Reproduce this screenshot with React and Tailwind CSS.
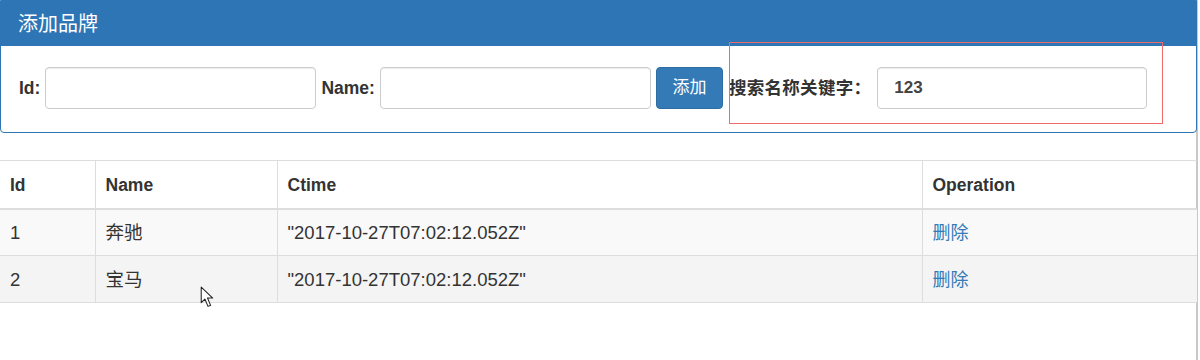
const rows = [
  { id: 1, name: '奔驰', ctime: '"2017-10-27T07:02:12.052Z"' },
  { id: 2, name: '宝马', ctime: '"2017-10-27T07:02:12.052Z"' },
]

function Cursor() {
  return (
    <svg viewBox="0 0 14 22" className="absolute left-[200px] top-[286px] w-[15px] h-[23px]">
      <path d="M1 1 L1 16 L4.5 12.5 L7.5 19.5 L10 18.5 L7 11.5 L12 11.5 Z"
        fill="#fff" stroke="#222" strokeWidth="1" strokeLinejoin="round" />
    </svg>
  )
}

const inputCls = 'h-[42px] border border-[#ccc] rounded-[4px] shadow-[inset_0_1px_1px_rgba(0,0,0,0.075)]'

export default function App() {
  return (
    <div className="relative w-[1200px] h-[360px] bg-white overflow-hidden font-['Liberation_Sans','Noto_Sans_CJK_SC',sans-serif] text-[#333]">
      <div className="w-[1198px] h-full border-r-2 border-[#c8c8c8]">
        {/* Panel */}
        <div className="w-[1197px] border border-[#2e75b6] rounded-b-[4px]">
          <div className="h-[45px] bg-[#2e75b6] flex items-center px-[17px]">
            <h3 className="text-white text-[20px]">添加品牌</h3>
          </div>
          <div className="h-[86px] flex items-center pb-[2px] gap-[5px] pl-[18px] text-[17.5px] font-bold">
            <label>Id:</label>
            <input className={`w-[271px] px-3 ${inputCls}`} />
            <label>Name:</label>
            <input className={`w-[271px] px-3 ${inputCls}`} />
            <button className="w-[67px] h-[42px] bg-[#337ab7] border border-[#2e6da4] rounded-[4px] text-white text-[17px] font-normal">添加</button>
            <label className="ml-[1px] tracking-[0.3px]">搜索名称关键字：</label>
            <input defaultValue="123" className={`ml-[1px] w-[270px] px-[16px] text-[17px] font-bold text-[#444] ${inputCls}`} />
          </div>
        </div>

        {/* Table */}
        <table className="mt-[27px] w-[1197px] border-collapse">
          <thead>
            <tr className="h-[48px] border-t border-[#ddd] border-b-2 text-[17.5px]">
              <th className="w-[95px] text-left font-bold px-[10px] pt-[2px] border-r border-[#ddd]">Id</th>
              <th className="w-[182px] text-left font-bold px-[10px] pt-[2px] border-r border-[#ddd]">Name</th>
              <th className="w-[645px] text-left font-bold px-[10px] pt-[2px] border-r border-[#ddd]">Ctime</th>
              <th className="text-left font-bold px-[10px] pt-[2px]">Operation</th>
            </tr>
          </thead>
          <tbody className="text-[18.5px]">
            {rows.map((r, i) => (
              <tr key={r.id} className={`h-[47px] border-b border-[#ddd] ${i === 0 ? 'bg-[#f9f9f9]' : 'bg-[#f4f4f4]'}`}>
                <td className="px-[10px] pt-[2px] border-r border-[#ddd]">{r.id}</td>
                <td className="px-[10px] pt-[2px] border-r border-[#ddd]">{r.name}</td>
                <td className="px-[10px] pt-[2px] border-r border-[#ddd]">{r.ctime}</td>
                <td className="px-[10px] pt-[2px]"><a className="text-[#337ab7] text-[18px]">删除</a></td>
              </tr>
            ))}
          </tbody>
        </table>
      </div>

      {/* annotation box */}
      <div className="absolute left-[729px] top-[42px] w-[434px] h-[82px] border-[1.5px] border-[#f06a6a]" />
      <Cursor />
    </div>
  )
}
